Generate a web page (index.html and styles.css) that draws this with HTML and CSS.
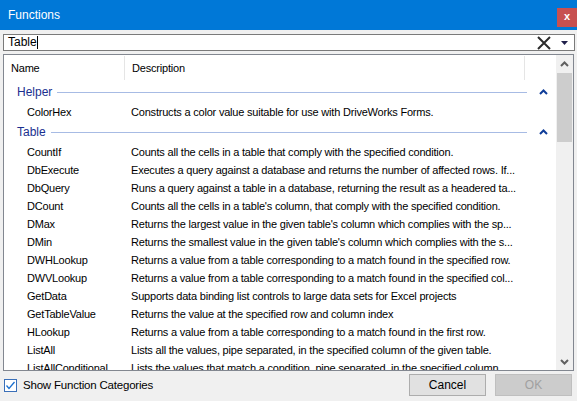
FILE: index.html
```html
<!DOCTYPE html>
<html>
<head>
<meta charset="utf-8">
<link rel="stylesheet" href="styles.css">
</head>
<body>
<div class="window">
  <div class="titlebar">
    <span class="title">Functions</span>
    <span class="close">x</span>
  </div>
  <div class="search">
    <span class="search-text">Table</span><span class="caret"></span>
    <span class="spacer"></span>
    <svg class="clear" width="14" height="14" viewBox="0 0 14 14"><path d="M1 1 L13 13 M13 1 L1 13" stroke="#2b2b2b" stroke-width="2" fill="none"/></svg>
    <svg class="drop" width="7" height="4" viewBox="0 0 7 4"><path d="M0 0 L7 0 L3.5 4 Z" fill="#1f1f4a"/></svg>
  </div>
  <div class="list">
    <div class="viewport">
      <div class="header">
        <div class="h-name">Name</div>
        <div class="h-desc">Description</div>
        <div class="h-rest"></div>
      </div>
      <div class="group">
        <span class="g-title">Helper</span><span class="g-line"></span>
        <svg class="chev" width="9" height="6" viewBox="0 0 9 6"><path d="M1 5 L4.5 1.5 L8 5" stroke="#0f3d99" stroke-width="2" fill="none"/></svg>
      </div>
      <div class="row"><span class="name">ColorHex</span><span class="desc">Constructs a color value suitable for use with DriveWorks Forms.</span></div>
      <div class="group">
        <span class="g-title">Table</span><span class="g-line"></span>
        <svg class="chev" width="9" height="6" viewBox="0 0 9 6"><path d="M1 5 L4.5 1.5 L8 5" stroke="#0f3d99" stroke-width="2" fill="none"/></svg>
      </div>
      <div class="row"><span class="name">CountIf</span><span class="desc">Counts all the cells in a table that comply with the specified condition.</span></div>
      <div class="row"><span class="name">DbExecute</span><span class="desc">Executes a query against a database and returns the number of affected rows. If...</span></div>
      <div class="row"><span class="name">DbQuery</span><span class="desc">Runs a query against a table in a database, returning the result as a headered ta...</span></div>
      <div class="row"><span class="name">DCount</span><span class="desc">Counts all the cells in a table's column, that comply with the specified condition.</span></div>
      <div class="row"><span class="name">DMax</span><span class="desc">Returns the largest value in the given table's column which complies with the sp...</span></div>
      <div class="row"><span class="name">DMin</span><span class="desc">Returns the smallest value in the given table's column which complies with the s...</span></div>
      <div class="row"><span class="name">DWHLookup</span><span class="desc">Returns a value from a table corresponding to a match found in the specified row.</span></div>
      <div class="row"><span class="name">DWVLookup</span><span class="desc">Returns a value from a table corresponding to a match found in the specified col...</span></div>
      <div class="row"><span class="name">GetData</span><span class="desc">Supports data binding list controls to large data sets for Excel projects</span></div>
      <div class="row"><span class="name">GetTableValue</span><span class="desc">Returns the value at the specified row and column index</span></div>
      <div class="row"><span class="name">HLookup</span><span class="desc">Returns a value from a table corresponding to a match found in the first row.</span></div>
      <div class="row"><span class="name">ListAll</span><span class="desc">Lists all the values, pipe separated, in the specified column of the given table.</span></div>
      <div class="row"><span class="name">ListAllConditional</span><span class="desc">Lists the values that match a condition, pipe separated, in the specified column...</span></div>
    </div>
    <div class="scrollbar">
      <div class="sb-btn"><svg width="9" height="6" viewBox="0 0 9 6"><path d="M1 5 L4.5 1.5 L8 5" stroke="#606060" stroke-width="2" fill="none"/></svg></div>
      <div class="sb-track"><div class="sb-thumb"></div></div>
      <div class="sb-btn"><svg width="9" height="6" viewBox="0 0 9 6"><path d="M1 1 L4.5 4.5 L8 1" stroke="#606060" stroke-width="2" fill="none"/></svg></div>
    </div>
  </div>
  <div class="footer">
    <label class="check">
      <span class="box"><svg width="11" height="11" viewBox="0 0 11 11"><path d="M1.5 5.5 L4 8.5 L9.5 2" stroke="#1a6fcf" stroke-width="1.3" fill="none"/></svg></span>
      <span class="check-label">Show Function Categories</span>
    </label>
    <span class="spacer"></span>
    <button class="btn">Cancel</button>
    <button class="btn disabled">OK</button>
  </div>
</div>
</body>
</html>
```

FILE: styles.css
```css
html, body {
  margin: 0;
  padding: 0;
  width: 577px;
  height: 401px;
  overflow: hidden;
}
body {
  background: #f0f0f0;
  font-family: "Liberation Sans", Arial, sans-serif;
  font-size: 11px;
  letter-spacing: -0.2px;
  color: #000;
}
.window {
  display: flex;
  flex-direction: column;
  height: 401px;
}
.titlebar {
  height: 30px;
  background: #0078d7;
  display: flex;
  align-items: flex-start;
  flex-shrink: 0;
}
.title {
  color: #fff;
  font-size: 12px;
  letter-spacing: 0;
  margin: 8px 0 0 8px;
  flex: 1;
}
.close {
  width: 20px;
  height: 19px;
  margin-top: 8px;
  background: #c75050;
  color: #fff;
  font-weight: bold;
  font-size: 11px;
  line-height: 17px;
  text-align: center;
}
.search {
  margin: 4px 2px 0 3px;
  height: 15px;
  border: 1px solid #7a7a7a;
  background: #fff;
  display: flex;
  align-items: center;
  padding: 0 0 0 4px;
  flex-shrink: 0;
  font-size: 12px;
  letter-spacing: 0;
}
.search-text { line-height: 15px; }
.caret {
  display: inline-block;
  width: 1px;
  height: 13px;
  background: #000;
}
.spacer { flex: 1; }
.clear { margin-right: 10px; }
.drop { margin-right: 6px; }
.list {
  margin: 3px 3px 0 3px;
  height: 315px;
  border: 1px solid #828790;
  background: #fff;
  display: flex;
  flex-shrink: 0;
}
.viewport {
  flex: 1;
  overflow: hidden;
  min-width: 0;
}
.header {
  display: flex;
  height: 26px;
  align-items: center;
}
.h-name {
  width: 113px;
  padding-left: 7px;
  border-right: 1px solid #e5e5e5;
  height: 24px;
  line-height: 24px;
}
.h-desc {
  width: 392px;
  padding-left: 7px;
  border-right: 1px solid #e5e5e5;
  height: 24px;
  line-height: 24px;
}
.h-rest { flex: 1; }
.group {
  display: flex;
  align-items: center;
  height: 22px;
  padding-left: 13px;
}
.g-title {
  color: #1a2f8f;
  font-size: 12px;
  letter-spacing: 0;
}
.g-line {
  flex: 1;
  height: 1px;
  background: #a7bbe4;
  margin: 1px 12px 0 5px;
}
.chev { margin-right: 8px; }
.row {
  display: flex;
  height: 18px;
  line-height: 18px;
  white-space: nowrap;
}
.name {
  width: 104px;
  padding-left: 23px;
  flex-shrink: 0;
}
.desc {
  overflow: hidden;
  width: 393px;
}
.scrollbar {
  width: 17px;
  background: #f0f0f0;
  display: flex;
  flex-direction: column;
  flex-shrink: 0;
}
.sb-btn {
  height: 17px;
  display: flex;
  align-items: center;
  justify-content: center;
}
.sb-track { flex: 1; }
.sb-thumb {
  margin: 1px 1px 0 1px;
  height: 69px;
  background: #cdcdcd;
}
.footer {
  display: flex;
  align-items: center;
  padding: 3px 5px 0 4px;
  height: 22px;
  font-size: 11.5px;
  letter-spacing: -0.2px;
}
.check {
  display: flex;
  align-items: center;
}
.box {
  width: 11px;
  height: 11px;
  border: 1px solid #3a6fb8;
  background: #fff;
  display: inline-flex;
  margin-right: 6px;
}
.btn {
  width: 77px;
  height: 22px;
  font-family: "Liberation Sans", Arial, sans-serif;
  font-size: 12px;
  background: #e1e1e1;
  border: 1px solid #adadad;
  margin-left: 9px;
  padding: 0;
  color: #000;
}
.btn.disabled {
  background: #cccccc;
  border-color: #bfbfbf;
  color: #a0a0a0;
}
```
